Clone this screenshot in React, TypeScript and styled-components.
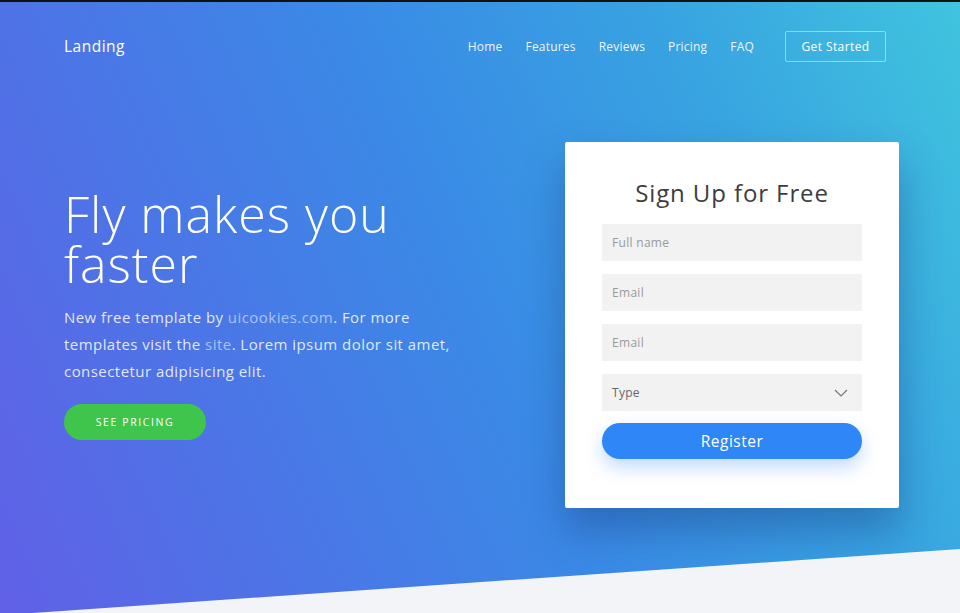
import React from "react";
import styled, { createGlobalStyle } from "styled-components";

const GlobalStyle = createGlobalStyle`
  html, body { margin: 0; padding: 0; background: #111; }
  body { font-family: "Open Sans", "DejaVu Sans", sans-serif; }
  * { box-sizing: border-box; }
`;

const Page = styled.div`
  width: 960px;
  height: 613px;
  border-top: 2px solid #111;
  overflow: hidden;
`;

const Hero = styled.section`
  position: relative;
  height: 611px;
  background: linear-gradient(66deg, #6160e6 0%, #4d74e6 24%, #3a8ae6 50%, #38a4e1 76%, #40c4de 100%);
  overflow: hidden;
`;

const Slant = styled.div`
  position: absolute;
  left: 0;
  right: 0;
  bottom: 0;
  height: 64px;
  background: #f3f4f8;
  clip-path: polygon(33px 100%, 100% 0, 100% 100%);
`;

const Nav = styled.nav`
  height: 88px;
  display: flex;
  align-items: center;
  justify-content: space-between;
  padding: 0 74px 0 64px;
`;

const Brand = styled.a`
  color: #fff;
  font-size: 15.5px;
  font-weight: 500;
  letter-spacing: 0.5px;
  text-decoration: none;
`;

const Links = styled.div`
  display: flex;
  align-items: center;
  gap: 23px;
`;

const NavLink = styled.a`
  color: rgba(255, 255, 255, 0.92);
  font-size: 12px;
  letter-spacing: 0.2px;
  text-decoration: none;
`;

const OutlineButton = styled.a`
  margin-left: 8px;
  width: 101px;
  height: 31px;
  display: flex;
  align-items: center;
  justify-content: center;
  border: 1px solid rgba(255, 255, 255, 0.45);
  border-radius: 2px;
  color: #fff;
  font-size: 12px;
  letter-spacing: 0.4px;
  text-decoration: none;
`;

const Main = styled.div`
  display: flex;
  justify-content: space-between;
  padding: 52px 61px 0 64px;
`;

const Intro = styled.div`
  width: 400px;
  padding-top: 47px;
`;

const Heading = styled.h1`
  margin: 0;
  color: #fff;
  font-size: 50px;
  line-height: 50px;
  font-weight: 300;
  letter-spacing: 1px;
`;

const Lead = styled.p`
  margin: 15px 0 0;
  color: rgba(255, 255, 255, 0.85);
  font-size: 15px;
  line-height: 27px;
  letter-spacing: 0.45px;
`;

const SoftLink = styled.a`
  color: rgba(255, 255, 255, 0.55);
  text-decoration: none;
`;

const PillButton = styled.a`
  margin-top: 19px;
  width: 142px;
  height: 36px;
  display: flex;
  align-items: center;
  justify-content: center;
  border-radius: 18px;
  background: #3fc54c;
  color: #fff;
  font-size: 10.5px;
  font-weight: 500;
  letter-spacing: 1.6px;
  text-transform: uppercase;
  text-decoration: none;
`;

const Card = styled.form`
  width: 334px;
  height: 366px;
  background: #fff;
  border-radius: 2px;
  box-shadow: 0 22px 40px rgba(20, 40, 110, 0.35);
  padding: 36px 37px 0;
  display: flex;
  flex-direction: column;
`;

const CardTitle = styled.h2`
  margin: 0 0 16px;
  text-align: center;
  color: #3d3d3d;
  font-size: 24px;
  line-height: 30px;
  font-weight: 400;
  letter-spacing: 0.9px;
`;

const Fields = styled.div`
  display: flex;
  flex-direction: column;
  gap: 13px;
`;

const Field = styled.input`
  width: 100%;
  height: 37px;
  border: none;
  outline: none;
  background: #f2f2f2;
  border-radius: 1px;
  padding: 0 10px;
  font-family: inherit;
  font-size: 12px;
  letter-spacing: 0.3px;
  color: #555;
  &::placeholder { color: #9a9a9a; }
`;

const SelectBox = styled.div`
  width: 100%;
  height: 37px;
  background: #f2f2f2;
  border-radius: 1px;
  padding: 0 14px 0 10px;
  display: flex;
  align-items: center;
  justify-content: space-between;
  font-size: 12px;
  letter-spacing: 0.3px;
  color: #666;
`;

const Register = styled.button`
  margin-top: 12px;
  width: 100%;
  height: 36px;
  border: none;
  border-radius: 18px;
  background: #2e86f7;
  color: #fff;
  font-family: inherit;
  font-size: 15.5px;
  letter-spacing: 0.5px;
  box-shadow: 0 8px 18px rgba(46, 134, 247, 0.3);
  cursor: pointer;
`;

const Chevron = () => (
  <svg width="14" height="8" viewBox="0 0 14 8" fill="none">
    <polyline points="1,1 7,7 13,1" stroke="#777" strokeWidth="1.2" />
  </svg>
);

export default function App() {
  return (
    <>
      <GlobalStyle />
      <Page>
        <Hero>
          <Nav>
            <Brand href="#">Landing</Brand>
            <Links>
              <NavLink href="#">Home</NavLink>
              <NavLink href="#">Features</NavLink>
              <NavLink href="#">Reviews</NavLink>
              <NavLink href="#">Pricing</NavLink>
              <NavLink href="#">FAQ</NavLink>
              <OutlineButton href="#">Get Started</OutlineButton>
            </Links>
          </Nav>
          <Main>
            <Intro>
              <Heading>
                Fly makes you
                <br />
                faster
              </Heading>
              <Lead>
                New free template by <SoftLink href="#">uicookies.com</SoftLink>. For more templates visit the{" "}
                <SoftLink href="#">site</SoftLink>. Lorem ipsum dolor sit amet, consectetur adipisicing elit.
              </Lead>
              <PillButton href="#">See Pricing</PillButton>
            </Intro>
            <Card onSubmit={(e) => e.preventDefault()}>
              <CardTitle>Sign Up for Free</CardTitle>
              <Fields>
                <Field placeholder="Full name" />
                <Field placeholder="Email" />
                <Field placeholder="Email" />
                <SelectBox>
                  <span>Type</span>
                  <Chevron />
                </SelectBox>
              </Fields>
              <Register type="submit">Register</Register>
            </Card>
          </Main>
          <Slant />
        </Hero>
      </Page>
    </>
  );
}
